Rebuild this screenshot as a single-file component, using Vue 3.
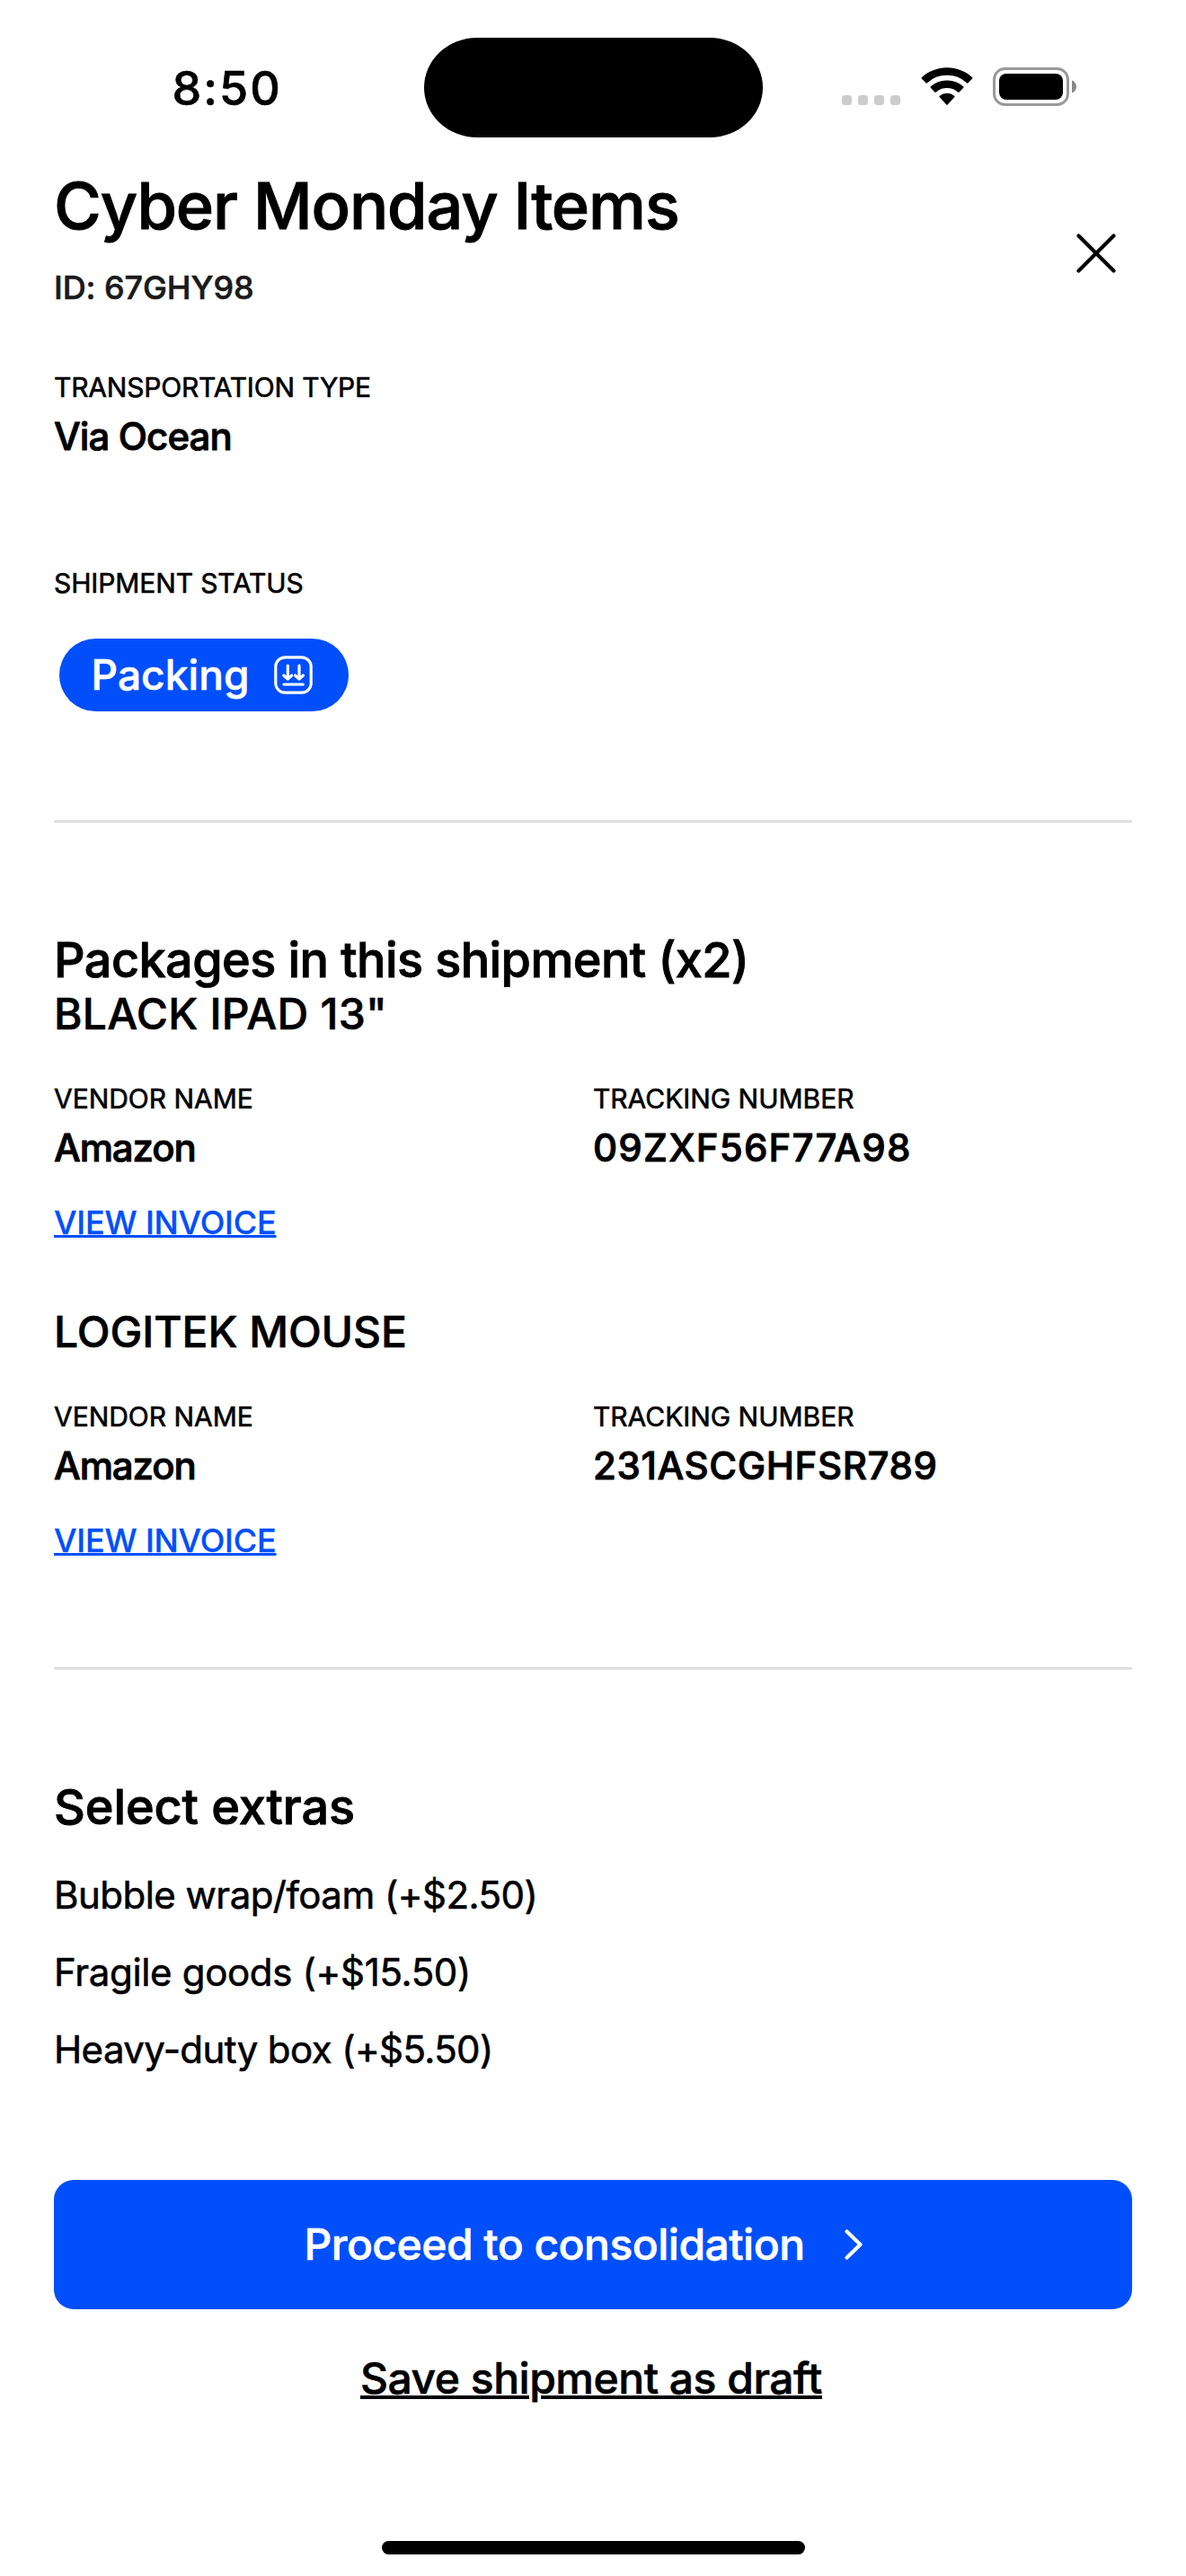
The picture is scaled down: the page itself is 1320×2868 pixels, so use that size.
<script setup>
const packages = [
  { name: 'BLACK IPAD 13"', nameSpacing: 0.26, vendor: 'Amazon', tracking: '09ZXF56F77A98', trackingSpacing: 1.22 },
  { name: 'LOGITEK MOUSE', nameSpacing: -0.06, vendor: 'Amazon', tracking: '231ASCGHFSR789', trackingSpacing: 0.6 },
]
const extras = [
  { label: 'Bubble wrap/foam (+$2.50)', spacing: -0.53 },
  { label: 'Fragile goods (+$15.50)', spacing: -0.33 },
  { label: 'Heavy-duty box (+$5.50)', spacing: -0.6 },
]
</script>

<template>
  <div class="screen">
    <div class="status-bar">
      <span class="time">8:50</span>
      <div class="island"></div>
      <div class="indicators">
        <div class="dots"><i v-for="n in 4" :key="n"></i></div>
        <svg class="wifi" width="58" height="43" viewBox="0 0 58 43">
          <path d="M0.8 12.6a1 1 0 0 1 0-1.4C8.3 4.3 18.2 0.2 29 0.2S49.7 4.3 57.2 11.2a1 1 0 0 1 0 1.4L52.6 17.2a1.2 1.2 0 0 1-1.7 0A32 32 0 0 0 29 8.8A32 32 0 0 0 7.1 17.2a1.2 1.2 0 0 1-1.7 0Z" />
          <path d="M10.8 22.8a1 1 0 0 1 0-1.5A27 27 0 0 1 29 14.5A27 27 0 0 1 47.2 21.3a1 1 0 0 1 0 1.5L42.7 27.4a1.2 1.2 0 0 1-1.7 0A18 18 0 0 0 29 23A18 18 0 0 0 17 27.4a1.2 1.2 0 0 1-1.7 0Z" />
          <path d="M20.8 33.2a1 1 0 0 1 0-1.5A13 13 0 0 1 29 28.8A13 13 0 0 1 37.2 31.7a1 1 0 0 1 0 1.5L29.7 41.4a1 1 0 0 1-1.4 0Z" />
        </svg>
        <svg class="battery" width="94" height="43" viewBox="0 0 94 43">
          <rect x="1.5" y="1.5" width="82" height="40" rx="12" fill="none" stroke="#999" stroke-width="3" />
          <rect x="7" y="7" width="71" height="29" rx="8" />
          <path d="M88 14.5c2.800 1 5 3.700 5 7s-2.200 6-5 7Z" fill="#888" />
        </svg>
      </div>
    </div>

    <header class="header">
      <div>
        <h1>Cyber Monday Items</h1>
        <p class="shipment-id">ID: 67GHY98</p>
      </div>
      <svg class="close" width="44" height="44" viewBox="0 0 44 44">
        <path d="M2.5 2.5l39 39M41.5 2.5l-39 39" />
      </svg>
    </header>

    <section class="field transport">
      <p class="label tight">TRANSPORTATION TYPE</p>
      <p class="value via">Via Ocean</p>
    </section>

    <section class="status">
      <p class="label">SHIPMENT STATUS</p>
      <div class="pill">
        <span>Packing</span>
        <svg width="43" height="43" viewBox="0 0 43 43">
          <rect x="1.8" y="1.8" width="39.4" height="39.4" rx="10.5" />
          <path d="M15.3 11v14.500M10.8 22l4.500 4 4.500-4M28 11v14.500M23.5 22l4.500 4 4.500-4M11 32h21.300" />
        </svg>
      </div>
    </section>

    <hr />

    <section class="packages">
      <h2 class="packages-title">Packages in this shipment (x2)</h2>
      <article v-for="p in packages" :key="p.tracking" class="package">
        <h3 :style="{ letterSpacing: p.nameSpacing + 'px' }">{{ p.name }}</h3>
        <div class="columns">
          <div class="field">
            <p class="label even">VENDOR NAME</p>
            <p class="value vendor">{{ p.vendor }}</p>
          </div>
          <div class="field">
            <p class="label even">TRACKING NUMBER</p>
            <p class="value" :style="{ letterSpacing: p.trackingSpacing + 'px' }">{{ p.tracking }}</p>
          </div>
        </div>
        <a class="invoice">VIEW INVOICE</a>
      </article>
    </section>

    <hr />

    <section class="extras">
      <h2>Select extras</h2>
      <ul>
        <li v-for="e in extras" :key="e.label" :style="{ letterSpacing: e.spacing + 'px' }">{{ e.label }}</li>
      </ul>
    </section>

    <button class="proceed">
      <span>Proceed to consolidation</span>
      <svg width="22" height="38" viewBox="0 0 22 38">
        <path d="M3.5 4.5L18.5 19L3.5 33.5" />
      </svg>
    </button>
    <a class="draft">Save shipment as draft</a>
    <div class="home-indicator"></div>
  </div>
</template>

<style>
body {
  margin: 0;
  background: #fff;
}
</style>

<style scoped>
.screen {
  display: flex;
  flex-direction: column;
  box-sizing: border-box;
  width: 1320px;
  height: 2868px;
  padding: 0 60px;
  overflow: hidden;
  background: #fff;
  color: #000;
  font-family: Inter, "Liberation Sans", sans-serif;
  font-weight: 500;
  -webkit-text-stroke: 0.6px currentColor;
}
h1, h2, h3, p, ul {
  margin: 0;
  padding: 0;
  font-weight: 500;
  white-space: nowrap;
}

.status-bar {
  display: grid;
  grid-template-columns: 411.5px 377px 1fr;
  height: 187px;
  flex: none;
}
.time {
  margin: 67px 0 0 131.5px;
  font-size: 52px;
  line-height: 64px;
  letter-spacing: 2.05px;
}
.island {
  height: 111px;
  margin-top: 41.5px;
  border-radius: 59px / 55.5px;
  background: #000;
}
.indicators {
  display: flex;
  align-items: flex-start;
  padding: 75px 0 0 88.5px;
}
.dots {
  display: flex;
  gap: 7px;
  margin-top: 31px;
}
.dots i {
  width: 11px;
  height: 11px;
  border-radius: 3.5px;
  background: #ccc;
}
.wifi {
  margin-left: 23px;
}
.battery {
  margin-left: 22px;
}

.header {
  display: flex;
  justify-content: space-between;
}
h1 {
  font-size: 72px;
  line-height: 84px;
  letter-spacing: -1.1px;
  -webkit-text-stroke-width: 1px;
}
.shipment-id {
  margin-top: 27px;
  font-size: 36px;
  line-height: 44px;
  letter-spacing: -0.1px;
  color: #1a1a1a;
}
.close {
  margin: 73px 18px 0 0;
  fill: none;
  stroke: #000;
  stroke-width: 4.2;
  stroke-linecap: round;
}

.label {
  font-size: 30px;
  font-weight: 400;
  line-height: 36px;
  letter-spacing: -0.12px;
}
.label.tight {
  letter-spacing: -0.19px;
}
.label.even {
  letter-spacing: -0.03px;
}
.value {
  margin-top: 12px;
  font-size: 42px;
  line-height: 50px;
  -webkit-text-stroke-width: 0.9px;
}
.via {
  letter-spacing: -0.91px;
}
.vendor {
  letter-spacing: -1.12px;
}
.transport {
  margin-top: 71px;
}

.status {
  margin-top: 120px;
}
.pill {
  display: flex;
  align-items: center;
  box-sizing: border-box;
  width: 322px;
  height: 81px;
  margin: 43.5px 0 0 6px;
  padding-left: 35.5px;
  border-radius: 40.5px;
  background: #004ffb;
  color: #fff;
  font-size: 46px;
  line-height: 56px;
}
.pill span {
  width: 203.5px;
  letter-spacing: 0.09px;
}
.pill svg {
  fill: none;
  stroke: #fff;
  stroke-width: 3.2;
  stroke-linecap: round;
  stroke-linejoin: round;
}

hr {
  flex: none;
  width: 1200px;
  height: 3px;
  margin: 121.5px 0 120px;
  border: 0;
  background: #e0e0e0;
}
.packages + hr {
  margin-top: 119px;
}
h2 {
  padding-top: 1px;
  font-size: 54px;
  line-height: 63px;
  letter-spacing: -0.1px;
  -webkit-text-stroke-width: 0.9px;
}
.packages-title {
  letter-spacing: -0.59px;
}
.package + .package {
  margin-top: 71px;
}
h3 {
  padding-top: 1px;
  font-size: 48px;
  line-height: 55px;
}
.columns {
  display: grid;
  grid-template-columns: 1fr 1fr;
  margin-top: 49px;
}
.invoice {
  display: block;
  width: max-content;
  margin-top: 36px;
  font-size: 36px;
  line-height: 44px;
  letter-spacing: -0.17px;
  color: #004ffb;
  text-decoration: underline;
  text-decoration-thickness: 3px;
  text-underline-offset: 1px;
  text-decoration-skip-ink: none;
  -webkit-text-stroke-width: 0.3px;
}

.extras ul {
  display: flex;
  flex-direction: column;
  gap: 36px;
  margin-top: 42px;
  list-style: none;
}
.extras li {
  font-size: 42px;
  font-weight: 400;
  line-height: 50px;
}

.proceed {
  display: flex;
  flex: none;
  align-items: center;
  justify-content: center;
  gap: 43px;
  height: 144px;
  margin-top: 120px;
  padding: 0 21px 0 0;
  border: 0;
  border-radius: 22px;
  background: #004ffb;
  color: #fff;
  font: inherit;
  font-size: 48px;
  line-height: 56px;
  letter-spacing: -0.52px;
}
.proceed svg {
  fill: none;
  stroke: #fff;
  stroke-width: 4.2;
  stroke-linecap: round;
  stroke-linejoin: round;
}
.draft {
  align-self: center;
  margin: 48px 4px 0 0;
  padding-top: 1px;
  font-size: 48px;
  line-height: 55px;
  letter-spacing: -0.48px;
  text-decoration: underline;
  text-decoration-thickness: 4px;
  text-underline-offset: 2px;
}
.home-indicator {
  flex: none;
  align-self: center;
  width: 471px;
  height: 15px;
  margin-top: 154px;
  border-radius: 7.5px;
  background: #000;
}
</style>
